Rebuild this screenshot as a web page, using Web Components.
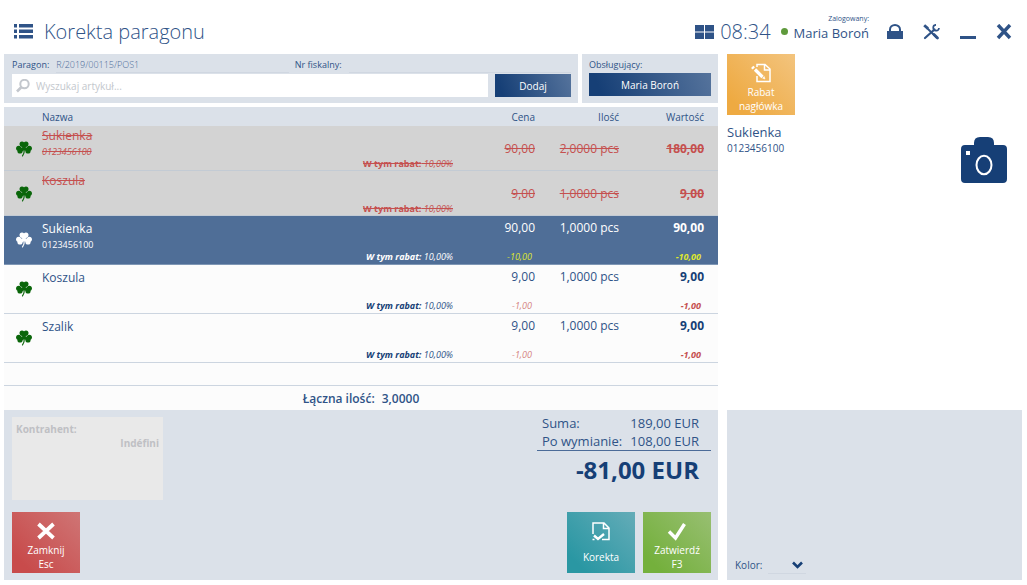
<!DOCTYPE html>
<html lang="pl">
<head>
<meta charset="utf-8">
<meta name="viewport" content="width=device-width, initial-scale=1">
<title>Korekta paragonu</title>
<style>
  :root {
    --navy: #163f76;
    --ink: #2f5387;
    --soft: #4b6b98;
    --panel: #dbe1e9;
    --line: #ccd5e0;
    --red: #c5504f;
  }
  body { margin: 0; background: #fff; color: var(--ink); font: 12px/16px "Open Sans", "Noto Sans", sans-serif; }
</style>
</head>
<body>
<pos-app></pos-app>

<template id="t-app">
  <style>
    :host { display: flex; flex-direction: column; min-height: 100vh; box-sizing: border-box; padding: 0 5px 5px 4px; }
    main { flex: 1; display: grid; grid-template-columns: minmax(0, 1fr) 295px; column-gap: 9px; }
    .left { display: flex; flex-direction: column; gap: 4px; }
    .bars { display: flex; gap: 4px; }
    search-bar { flex: 1; }
    .sheet { flex: 1; display: flex; flex-direction: column; }
    receipt-table { flex: 1; }
  </style>
  <pos-header>Korekta paragonu</pos-header>
  <main>
    <div class="left">
      <div class="bars">
        <search-bar></search-bar>
        <staff-box name="Maria Boroń">Obsługujący:</staff-box>
      </div>
      <div class="sheet">
        <receipt-table></receipt-table>
        <receipt-summary></receipt-summary>
      </div>
    </div>
    <item-sidebar></item-sidebar>
  </main>
</template>

<template id="t-header">
  <style>
    :host { display: flex; align-items: center; height: 54px; padding: 9px 10px 0; box-sizing: border-box; color: var(--ink); }
    h1 { flex: 1; margin: 0; font-size: 20px; line-height: 28px; font-weight: 300; }
    button { border: 0; padding: 0; background: none; color: inherit; display: block; cursor: pointer; }
    svg { display: block; }
    .menu { margin-right: 10px; }
    .clock { font-size: 20px; line-height: 28px; font-weight: 300; margin: 0 10px 0 6px; }
    .dot { width: 7px; height: 7px; border-radius: 50%; background: #5f9a3c; margin-right: 6px; }
    .user { position: relative; font-size: 13px; line-height: 20px; padding-top: 2px; }
    .user small { position: absolute; right: 0; bottom: 19px; font-size: 7px; line-height: 10px; }
    .tools { display: flex; align-items: center; gap: 20px; margin-left: 18px; }
  </style>
  <button class="menu" aria-label="Menu"><svg width="20" height="16" viewBox="0 0 20 16" fill="currentColor"><path d="M0 0h3v3.500H0zM5 0h14v3.500H5zM0 5.500h3V9H0zM5 5.500h14V9H5zM0 11h3v3.500H0zM5 11h14v3.500H5z"/></svg></button>
  <h1><slot></slot></h1>
  <button aria-label="Okna"><svg width="19" height="14" viewBox="0 0 19 14" fill="currentColor"><path d="M0 0h9v6.500H0zM10 0h9v6.500h-9zM0 7.500h9V14H0zM10 7.500h9V14h-9z"/></svg></button>
  <span class="clock">08:34</span>
  <span class="dot"></span>
  <span class="user"><small>Zalogowany:</small>Maria Boroń</span>
  <div class="tools">
    <button aria-label="Zablokuj"><svg width="16" height="16" viewBox="0 0 16 16"><path fill="currentColor" d="M0 7h16v8H0z"/><path d="M3 8V5.500a5 4.500 0 0 1 10 0V8" fill="none" stroke="currentColor" stroke-width="2"/></svg></button>
    <button aria-label="Ustawienia"><svg width="17" height="16" viewBox="0 0 17 16"><path d="M4.500 4.500L14 14" stroke="currentColor" stroke-width="2"/><path d="M1.200 1.200L5 4.600" stroke="currentColor" stroke-width="2.800"/><path d="M2 14L11.500 5.500" stroke="currentColor" stroke-width="2.200" stroke-linecap="round"/><path d="M13 .8a2.900 2.900 0 1 0 3 3.200" fill="none" stroke="currentColor" stroke-width="1.700"/><path d="M11 10.500l3.500 3.500" stroke="currentColor" stroke-width="2.800" stroke-linecap="round"/></svg></button>
    <button aria-label="Minimalizuj"><svg width="16" height="16" viewBox="0 0 16 16" fill="currentColor"><path d="M0 12h16v3H0z"/></svg></button>
    <button aria-label="Zamknij okno"><svg width="16" height="16" viewBox="0 0 16 16"><path d="M2 1l12 13M14 1L2 14" stroke="currentColor" stroke-width="3.400"/></svg></button>
  </div>
</template>

<template id="t-search">
  <style>
    :host { display: grid; grid-template-columns: minmax(0, 1fr) 76px; column-gap: 7px; background: var(--panel); padding: 3px 7px 6px 8px; box-sizing: border-box; }
    .fields { grid-column: 1 / -1; display: grid; grid-template-columns: auto 238fr auto 222fr; height: 17px; font-size: 9px; line-height: 15px; }
    .fields label { margin-right: 7px; }
    .fields input { font: 300 9px/15px "Open Sans", "Noto Sans", sans-serif; color: var(--soft); border: 0; border-bottom: 1px solid #d0d7e1; background: none; padding: 0; height: 15px; width: 100%; min-width: 0; box-sizing: content-box; outline: 0; }
    .fields .gap { padding-right: 6px; }
    .box { display: flex; align-items: center; height: 23px; background: #fff; padding-left: 4px; gap: 6px; }
    .box input { flex: 1; min-width: 0; border: 0; outline: 0; padding: 0; background: none; font: 10px/20px "Open Sans", "Noto Sans", sans-serif; color: var(--ink); }
    .box input::placeholder { color: #c3c7cd; opacity: 1; }
    svg { color: #c3c7cd; }
  </style>
  <div class="fields">
    <label for="doc">Paragon:</label><span class="gap"><input id="doc" readonly value="R/2019/00115/POS1"></span>
    <label for="fis">Nr fiskalny:</label><input id="fis" readonly>
  </div>
  <div class="box">
    <svg width="14" height="14" viewBox="0 0 14 14" fill="none" stroke="currentColor"><circle cx="8.500" cy="5" r="4.200" stroke-width="2"/><path d="M5.500 8L1 12.500" stroke-width="2.600"/></svg>
    <input type="text" placeholder="Wyszukaj artykuł..." aria-label="Wyszukaj artykuł">
  </div>
  <bar-button>Dodaj</bar-button>
</template>

<template id="t-bar-button">
  <style>
    :host { display: block; }
    button { display: block; width: 100%; height: 23px; border: 0; padding: 0; color: #fff; font: 10px/20px "Open Sans", "Noto Sans", sans-serif; background: linear-gradient(70deg, #163f76 10%, #55739c); cursor: pointer; }
  </style>
  <button><slot></slot></button>
</template>

<template id="t-staff">
  <style>
    :host { display: block; width: 136px; background: var(--panel); padding: 3px 7px 7px; box-sizing: border-box; }
    div { font-size: 9px; line-height: 16px; }
  </style>
  <div><slot></slot></div>
  <bar-button></bar-button>
</template>

<template id="t-tile">
  <style>
    :host { display: block; width: 68px; --a: #c84b4b; --b: #cf7575; }
    :host([tone="amber"]) { --a: #eeaa42; --b: #f3c47e; }
    :host([tone="teal"]) { --a: #2a97a3; --b: #64acb8; }
    :host([tone="green"]) { --a: #74b03c; --b: #98bf72; }
    button { width: 100%; height: 61px; border: 0; padding: 9px 0 0; display: flex; flex-direction: column; align-items: center; color: #fff; font: 10px/14px "Open Sans", "Noto Sans", sans-serif; background: linear-gradient(45deg, var(--a) 15%, var(--b)); cursor: pointer; }
    .text { flex: 1; display: flex; align-items: center; text-align: center; }
    ::slotted(svg) { display: block; }
  </style>
  <button><slot name="icon"></slot><span class="text"><span><slot></slot></span></span></button>
</template>

<template id="t-table">
  <style>
    :host { display: flex; flex-direction: column; background: #fcfcfc; }
    table { width: 100%; border-collapse: separate; border-spacing: 0; table-layout: fixed; }
    .c-icon { width: 38px; } .c-name { width: 130px; } .c-price { width: 82px; } .c-num { width: 84px; } .c-sum { width: 99px; }
    th, td { padding: 0; text-align: right; vertical-align: top; font-weight: 400; }
    th { background: var(--panel); height: 18px; padding-top: 1px; font-size: 10px; line-height: 18px; }
    th.name, td.name { text-align: left; }
    td { border-bottom: 1px solid var(--line); height: 48px; line-height: 24px; }
    td:last-child, th:last-child { padding-right: 14px; }
    td:last-child { font-weight: 700; color: var(--navy); }
    td.icon { vertical-align: middle; text-align: left; padding-left: 12px; color: #0a660a; }
    td svg { display: block; }
    td.name { line-height: 18px; padding-top: 4px; height: 44px; }
    td small { display: block; font-size: 9px; line-height: 14px; }
    td.disc { vertical-align: bottom; font-size: 9px; line-height: 14px; font-style: italic; }
    td.disc b { color: var(--navy); }
    td em { display: block; font-size: 9px; line-height: 14px; margin-top: 10px; padding-right: 3px; color: #d58482; }
    td:last-child em { color: var(--red); }
    .void td { background: #d3d3d3; color: var(--red); text-decoration: line-through; height: 42px; padding-top: 2px; vertical-align: middle; border-color: #c3cbd4; }
    .void td.icon { color: #0a660a; }
    .void td.name { vertical-align: top; padding-top: 1px; height: 43px; }
    .void td.name small { font-style: italic; }
    .void td.disc { vertical-align: bottom; line-height: 12px; }
    .void td.disc b { color: inherit; font-style: normal; }
    .active td, .active td:last-child, .active td.disc b { background: #4f6e97; color: #fff; border-color: #7f97b5; }
    .active td em, .active td:last-child em { color: #dfe62e; }
    .total { margin-top: auto; border-top: 1px solid var(--line); height: 24px; font-weight: 600; line-height: 26px; display: flex; justify-content: center; gap: 7px; color: var(--ink); }
  </style>
  <table>
    <colgroup><col class="c-icon"><col class="c-name"><col><col class="c-price"><col class="c-num"><col class="c-sum"></colgroup>
    <thead><tr><th></th><th class="name" colspan="2">Nazwa</th><th>Cena</th><th>Ilość</th><th>Wartość</th></tr></thead>
    <tbody></tbody>
  </table>
  <div class="total"><span>Łączna ilość:</span><span>3,0000</span></div>
</template>

<template id="t-summary">
  <style>
    :host { display: grid; grid-template-columns: minmax(0, 1fr) auto; align-content: space-between; height: 170px; background: var(--panel); padding: 7px 7px 7px 8px; box-sizing: border-box; }
    .client { width: 151px; height: 83px; box-sizing: border-box; background: #e9e9e9; color: #bfc0c4; font-size: 10px; line-height: 14px; font-weight: 700; padding: 5px 4px; }
    .client p { margin: 0; }
    .client p + p { text-align: right; }
    .sums { width: 174px; color: var(--ink); }
    dl { margin: 0; display: grid; grid-template-columns: auto auto; justify-content: space-between; font-size: 13px; line-height: 18px; padding: 0 12px 0 5px; height: 33px; border-bottom: 1px solid var(--soft); align-content: end; }
    dt, dd { margin: 0; }
    dd { text-align: right; }
    .due { text-align: right; padding-right: 12px; color: var(--navy); font-size: 24px; line-height: 38px; font-weight: 700; white-space: nowrap; }
    .acts { display: flex; gap: 8px; justify-content: flex-end; }
  </style>
  <div class="client"><p>Kontrahent:</p><p>Indéfini</p></div>
  <div class="sums">
    <dl><dt>Suma:</dt><dd>189,00 EUR</dd><dt>Po wymianie:</dt><dd>108,00 EUR</dd></dl>
    <div class="due">-81,00 EUR</div>
  </div>
  <tile-button><svg slot="icon" width="20" height="20" viewBox="0 0 20 20"><path d="M2.500 3l15 14M17.500 3l-15 14" stroke="#fff" stroke-width="3.800"/></svg>Zamknij<br>Esc</tile-button>
  <div class="acts">
    <tile-button tone="teal"><svg slot="icon" width="20" height="20" viewBox="0 0 20 20" fill="none" stroke="#fff" stroke-width="1.500"><path d="M2 13V2h11l5 5v11.500h-7M12.500 2v5.500h5.500M1.500 18.500h2"/><path d="M3 14.500l4 3.500 6-5" stroke-width="2.400"/></svg>Korekta</tile-button>
    <tile-button tone="green"><svg slot="icon" width="20" height="20" viewBox="0 0 20 20"><path d="M2 10.500l6.500 6.500L17.500 3" fill="none" stroke="#fff" stroke-width="3.400"/></svg>Zatwierdź<br>F3</tile-button>
  </div>
</template>

<template id="t-sidebar">
  <style>
    :host { display: flex; flex-direction: column; }
    .item { display: flex; justify-content: space-between; padding: 8px 15px 0 0; }
    .item h2 { margin: 0; font-size: 13px; line-height: 18px; font-weight: 400; }
    .item p { margin: 0; font-size: 10px; line-height: 14px; }
    .item svg { display: block; margin-top: 14px; color: var(--navy); }
    .foot { margin-top: auto; height: 170px; box-sizing: border-box; background: var(--panel); display: flex; align-items: flex-end; gap: 6px; padding: 0 8px 6px; font-size: 10px; line-height: 18px; }
    .pick { position: relative; width: 38px; }
    select { appearance: none; display: block; width: 100%; height: 20px; border: 0; border-bottom: 1px solid #d0d7e1; background: none; border-radius: 0; padding: 0; font: 10px/18px "Open Sans", "Noto Sans", sans-serif; color: var(--ink); }
    .pick svg { position: absolute; right: 3px; top: 7px; pointer-events: none; color: var(--navy); }
  </style>
  <tile-button tone="amber"><svg slot="icon" width="20" height="20" viewBox="0 0 20 20" fill="none" stroke="#fff"><path d="M6 4V1.500h8L19 6v12.500H6V13M13.500 1.500V7H19" stroke-width="1.500"/><path d="M4 6.500l7.500 7.500" stroke-width="3.200"/><path d="M1.200 3.800l1.600 1.600" stroke-width="3.200"/><path d="M11.500 15.200l2.500.8-.8-2.500z" fill="#fff" stroke-width=".5"/></svg>Rabat<br>nagłówka</tile-button>
  <div class="item">
    <div><h2>Sukienka</h2><p>0123456100</p></div>
    <svg width="46" height="46" viewBox="0 0 46 46"><path fill="currentColor" d="M4 8h9V6q0-6 6-6h8q6 0 6 6v2h9q4 0 4 4v30q0 4-4 4H4q-4 0-4-4V12q0-4 4-4z"/><path fill="#fff" d="M5 14h4v4H5z"/><ellipse cx="23" cy="28" rx="7.500" ry="9.200" fill="none" stroke="#fff" stroke-width="2"/></svg>
  </div>
  <div class="foot">
    <label for="color">Kolor:</label>
    <div class="pick"><select id="color"><option></option></select>
      <svg width="11" height="8" viewBox="0 0 11 8"><path d="M1 1.500L5.500 6 10 1.500" fill="none" stroke="currentColor" stroke-width="2.600"/></svg></div>
  </div>
</template>

<script>
  const stamp = (host, id) => {
    const root = host.attachShadow({ mode: "open" });
    root.append(document.getElementById(id).content.cloneNode(true));
    return root;
  };
  const simple = (tag, id) => customElements.define(tag, class extends HTMLElement {
    constructor() { super(); stamp(this, id); }
  });

  const CLOVER = `<svg width="16" height="16" viewBox="0 0 16 16" fill="currentColor"><circle cx="6" cy="3" r="2.500"/><circle cx="10" cy="3" r="2.500"/><circle cx="2.700" cy="7.300" r="2.600"/><circle cx="4" cy="10" r="2.600"/><circle cx="13.300" cy="7.300" r="2.600"/><circle cx="12" cy="10" r="2.600"/><path d="M4 4h8l-2.500 3 4-1.500-1 6.500L8.500 9l-5 3-1-6.500 4 1.500z"/><path d="M8.300 8q.3 4.500-2 7.300" fill="none" stroke="currentColor" stroke-width="1.200"/></svg>`;

  const ITEMS = [
    { name: "Sukienka", code: "0123456100", price: "90,00", qty: "2,0000 pcs", sum: "180,00", state: "void" },
    { name: "Koszula", price: "9,00", qty: "1,0000 pcs", sum: "9,00", state: "void" },
    { name: "Sukienka", code: "0123456100", price: "90,00", qty: "1,0000 pcs", sum: "90,00", off: "-10,00", state: "active" },
    { name: "Koszula", price: "9,00", qty: "1,0000 pcs", sum: "9,00", off: "-1,00" },
    { name: "Szalik", price: "9,00", qty: "1,0000 pcs", sum: "9,00", off: "-1,00" }
  ];

  customElements.define("receipt-table", class extends HTMLElement {
    constructor() {
      super();
      const body = stamp(this, "t-table").querySelector("tbody");
      body.innerHTML = ITEMS.map(i => {
        const off = i.off ? `<em>${i.off}</em>` : "";
        return `<tr class="${i.state || ""}"><td class="icon">${CLOVER}</td>` +
          `<td class="name">${i.name}${i.code ? `<small>${i.code}</small>` : ""}</td>` +
          `<td class="disc"><b>W tym rabat:</b> 10,00%</td>` +
          `<td>${i.price}${off}</td><td>${i.qty}</td><td>${i.sum}${off}</td></tr>`;
      }).join("");
    }
  });

  customElements.define("staff-box", class extends HTMLElement {
    constructor() { super(); stamp(this, "t-staff"); }
    connectedCallback() { this.shadowRoot.querySelector("bar-button").textContent = this.getAttribute("name"); }
  });

  simple("bar-button", "t-bar-button");
  simple("tile-button", "t-tile");
  simple("pos-header", "t-header");
  simple("search-bar", "t-search");
  simple("receipt-summary", "t-summary");
  simple("item-sidebar", "t-sidebar");
  simple("pos-app", "t-app");
</script>
</body>
</html>
